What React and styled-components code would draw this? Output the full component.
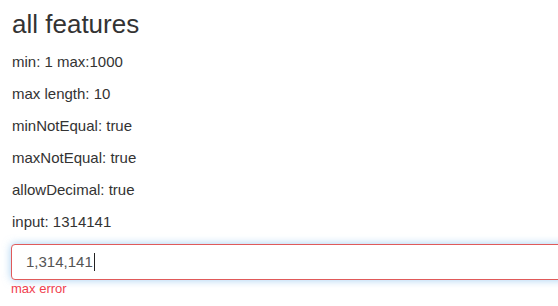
import React from 'react';
import styled, { createGlobalStyle } from 'styled-components';

const GlobalStyle = createGlobalStyle`
  html, body {
    margin: 0;
    padding: 0;
    background: #fff;
    overflow: hidden;
  }
  body {
    font-family: "Liberation Sans", Arial, sans-serif;
    font-size: 15px;
    line-height: 20px;
    color: #333;
  }
`;

const Page = styled.div`
  padding: 10px 0 0 12px;
  width: 546px;
  overflow: hidden;
`;

const Title = styled.h3`
  margin: 0 0 13.4px;
  font-size: 26px;
  font-weight: 500;
  line-height: 28.6px;
`;

const Line = styled.p`
  margin: 0 0 12px;
`;

const Field = styled.div`
  margin-left: -1px;
`;

const InputBox = styled.div`
  box-sizing: border-box;
  height: 36px;
  width: 620px;
  padding: 7px 14px;
  border: 1px solid #e05a5a;
  border-radius: 4px;
  font-size: 15px;
  line-height: 20px;
  color: #555;
  background: #fff;
  box-shadow: 0 0 8px rgba(102, 175, 233, 0.6);
  display: flex;
  align-items: center;
`;

const Caret = styled.span`
  display: inline-block;
  width: 1px;
  height: 18px;
  background: #222;
  margin-left: 1px;
`;

const ErrorText = styled.div`
  margin-top: 2px;
  font-size: 13px;
  line-height: 14px;
  color: #f0414e;
`;

const rows = [
  'min: 1 max:1000',
  'max length: 10',
  'minNotEqual: true',
  'maxNotEqual: true',
  'allowDecimal: true',
  'input: 1314141',
];

export default function App() {
  return (
    <>
      <GlobalStyle />
      <Page>
        <Title>all features</Title>
        {rows.map((r) => (
          <Line key={r}>{r}</Line>
        ))}
        <Field>
          <InputBox>
            1,314,141<Caret />
          </InputBox>
          <ErrorText>max error</ErrorText>
        </Field>
      </Page>
    </>
  );
}
